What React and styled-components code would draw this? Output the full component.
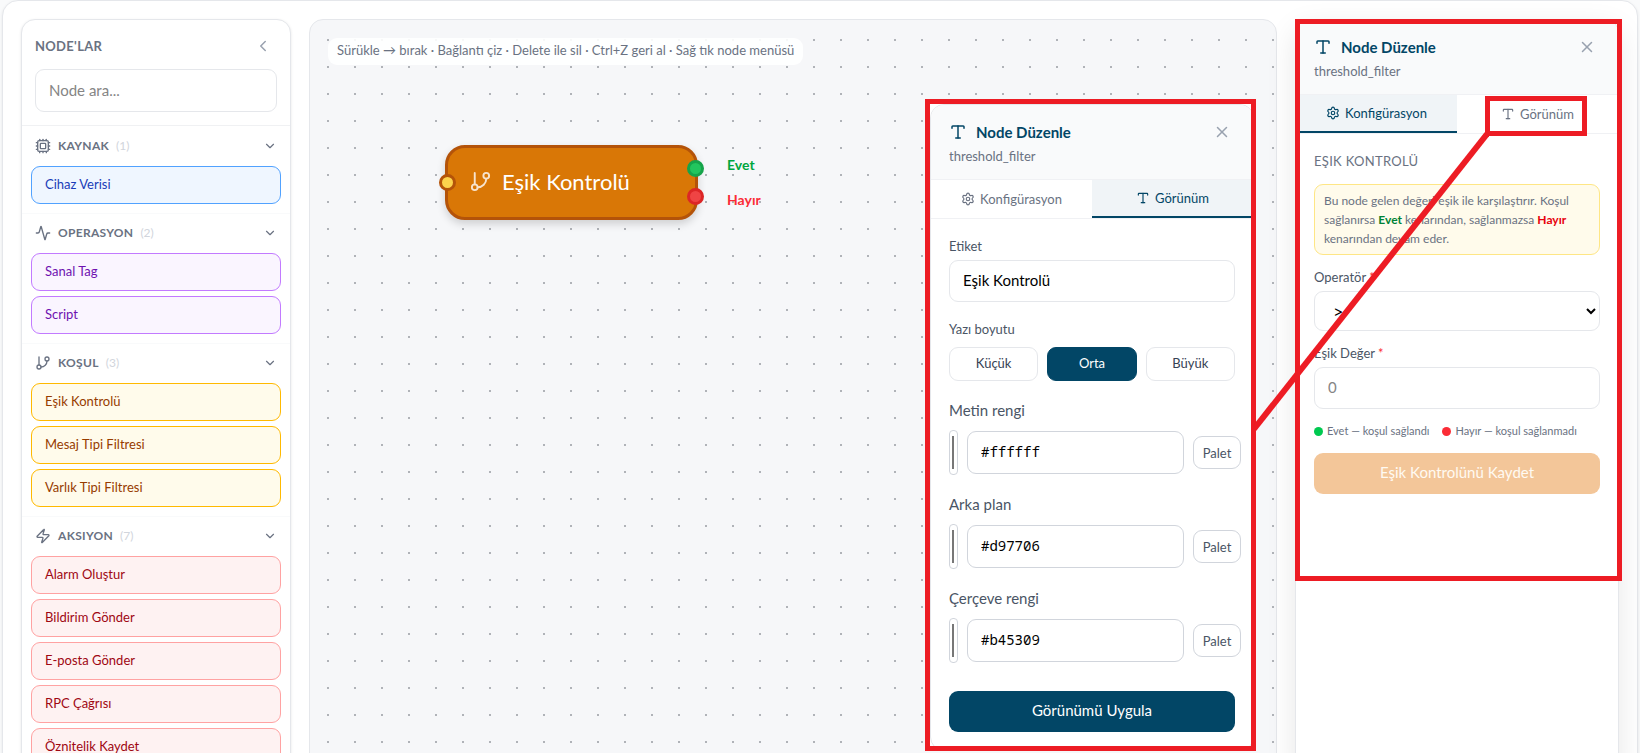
import React from "react";
import styled, { createGlobalStyle, css } from "styled-components";
import { Activity, ChevronDown, ChevronLeft, Cpu, GitBranch, Settings, Type, X, Zap } from "lucide-react";

const GlobalStyle = createGlobalStyle`
  *, *::before, *::after { box-sizing: border-box; }
  body { margin: 0; background: #f9fafb; color: #364153; font-family: Lato, "Noto Sans", sans-serif; font-size: 14px; }
  button, input, select { font: inherit; color: inherit; margin: 0; }
  button { cursor: pointer; }
  h1, h2, h3, p { margin: 0; font-weight: inherit; font-size: inherit; }
`;

const ink = "#024666";
const red = "#ed1c24";

const Page = styled.div`
  height: 100vh;
  overflow: hidden;
  padding: 0 2px;
`;

const Shell = styled.main`
  position: relative;
  display: flex;
  gap: 18px;
  padding: 18px;
  background: #fff;
  border: 1px solid #e5e7eb;
  border-radius: 16px;
  box-shadow: 0 1px 3px rgba(0, 0, 0, 0.08);
`;

/* ---------- node palette ---------- */

const Palette = styled.aside`
  flex: 0 0 270px;
  background: #fff;
  border: 1px solid #e5e7eb;
  border-radius: 14px;
  box-shadow: 0 1px 3px rgba(0, 0, 0, 0.1);
`;

const PaletteHead = styled.header`
  padding: 12px 13px 13px;
  border-bottom: 1px solid #f0f1f3;
`;

const PaletteTitleRow = styled.div`
  display: flex;
  align-items: center;
  justify-content: space-between;
  height: 27px;
  margin-bottom: 10px;
  padding-right: 5px;
`;

const PaletteTitle = styled.h2`
  font-size: 13px;
  font-weight: 700;
  letter-spacing: 0.3px;
  color: #6a7282;
`;

const IconButton = styled.button`
  display: inline-flex;
  padding: 0;
  border: 0;
  background: none;
  color: #99a1af;
`;

const Field = styled.input`
  display: block;
  width: 100%;
  height: ${(p) => (p.$tall ? 43 : 42)}px;
  min-width: 0;
  padding: 0 13px 2px;
  border: 1px solid ${(p) => (p.$mono ? "#d1d5dc" : "#e5e7eb")};
  border-radius: 9px;
  background: #fff;
  color: #000;
  font-size: 15px;
  ${(p) => p.$mono && css`font-family: "Noto Sans Mono", "DejaVu Sans Mono", monospace; font-size: 14px;`}
  &::placeholder { color: #858585; opacity: 1; }
`;

const Section = styled.section`
  padding: 0 9px 9px;
  border-top: 1px solid ${(p) => (p.$first ? "transparent" : "#f9fafb")};
`;

const SectionHead = styled.button`
  display: flex;
  align-items: center;
  gap: 7px;
  width: 100%;
  height: 39px;
  padding: 0 4px 2px;
  border: 0;
  background: none;
  color: #6a7282;
  font-size: 12px;
  > :last-child { margin-left: auto; }
`;

const SectionName = styled.span`
  font-weight: 700;
  letter-spacing: 0.3px;
`;

const SectionCount = styled.span`
  color: #d1d5dc;
`;

const NodeList = styled.div`
  display: grid;
  gap: 5px;
`;

const tones = {
  blue: ["#eff6ff", "#51a2ff", "#193cb8"],
  purple: ["#faf5ff", "#c27aff", "#6e11b0"],
  amber: ["#fffbeb", "#ffb900", "#973c00"],
  red: ["#fef2f2", "#ffa2a2", "#9f0712"],
};

const NodeItem = styled.button`
  height: 38px;
  padding: 0 13px 2px;
  text-align: left;
  border: 1px solid ${(p) => tones[p.$tone][1]};
  border-radius: 9px;
  background: ${(p) => tones[p.$tone][0]};
  color: ${(p) => tones[p.$tone][2]};
  font-size: 13px;
`;

/* ---------- canvas ---------- */

const Canvas = styled.section`
  position: relative;
  flex: 1 1 0;
  min-width: 0;
  padding: 18px;
  border: 1px solid #e5e7eb;
  border-radius: 14px;
  background: #f6f7f9 radial-gradient(circle at 1px 1px, #b0b3b8 1px, transparent 1px) 17px 19px / 27px 27px;
`;

const Hint = styled.p`
  display: inline-block;
  padding: 0 9px 2px;
  border-radius: 9px;
  background: rgba(255, 255, 255, 0.9);
  color: #6a7282;
  font-size: 13px;
  line-height: 25px;
`;

const FlowNode = styled.div`
  position: absolute;
  left: 135px;
  top: 125px;
  display: flex;
  align-items: center;
  gap: 10px;
  width: 253px;
  height: 75px;
  padding: 0 21px 3px;
  border: 3px solid #b45309;
  border-radius: 20px;
  background: #d97706;
  box-shadow: 0 4px 9px rgba(0, 0, 0, 0.16);
  color: #fff;
  font-size: 22px;
  svg { opacity: 0.8; }
`;

const Handle = styled.i`
  position: absolute;
  ${(p) => p.$side}: -9px;
  top: ${(p) => p.$top}px;
  width: 17px;
  height: 17px;
  border: 3px solid ${(p) => p.$line};
  border-radius: 50%;
  background: ${(p) => p.$fill};
`;

const PortLabel = styled.span`
  position: absolute;
  left: 279px;
  top: ${(p) => p.$top}px;
  color: ${(p) => p.$color};
  font-size: 14px;
  line-height: 18px;
  font-weight: 700;
`;

/* ---------- editor panel ---------- */

const Panel = styled.aside`
  position: relative;
  flex: 0 0 324px;
  width: 324px;
  border: 1px solid #e5e7eb;
  border-radius: 14px;
  background: #fff;
  box-shadow: ${(p) => (p.$flat ? "none" : "0 10px 30px rgba(0, 0, 0, 0.1)")};
`;

const PanelHead = styled.header`
  display: grid;
  gap: 3px;
  padding: 14px 18px;
  border-bottom: 1px solid #f0f1f4;
  border-radius: 13px 13px 0 0;
  background: #f9fafb;
`;

const PanelTitle = styled.div`
  display: flex;
  align-items: center;
  gap: 9px;
  height: 25px;
  color: ${ink};
  button { margin-left: auto; margin-right: 4px; }
`;

const TitleText = styled.h2`
  font-size: 15px;
  font-weight: 700;
`;

const PanelSub = styled.p`
  color: #6a7282;
  font-size: 13px;
  line-height: 18px;
`;

const Tabs = styled.div`
  display: flex;
  border-bottom: 1px solid #f0f1f4;
`;

const Tab = styled.button`
  flex: 1;
  display: flex;
  align-items: center;
  justify-content: center;
  gap: 5px;
  height: 38px;
  padding: 0;
  border: 0;
  border-bottom: ${(p) => (p.$active ? 2 : 0)}px solid ${ink};
  background: ${(p) => (p.$active ? "#f0f4f7" : "#fff")};
  color: ${(p) => (p.$active ? ink : "#6a7282")};
  font-size: 13px;
`;

const PanelBody = styled.div`
  display: flex;
  flex-direction: column;
  gap: ${(p) => p.$gap}px;
  padding: 18px;
`;

const Eyebrow = styled.h3`
  color: #6a7282;
  font-size: 13px;
  line-height: 19px;
  letter-spacing: 0.3px;
`;

const Callout = styled.p`
  padding: 6px 9px;
  border: 1px solid #fee685;
  border-radius: 9px;
  background: #fffbeb;
  color: #6a7282;
  font-size: 12px;
  line-height: 19px;
`;

const Mark = styled.strong`
  color: ${(p) => p.$color};
  font-weight: 700;
`;

const Group = styled.div`
  display: grid;
  gap: ${(p) => p.$gap || 5}px;
`;

const Label = styled.label`
  color: #4a5565;
  font-size: ${(p) => (p.$large ? 15 : 13)}px;
  line-height: ${(p) => (p.$large ? 22 : 18)}px;
`;

const Required = styled.span`
  color: #fb2c36;
`;

const Select = styled.select`
  width: 100%;
  height: 40px;
  padding: 0 4px 0 14px;
  border: 1px solid #e5e7eb;
  border-radius: 9px;
  background: #fff;
  color: #000;
  font-size: 18px;
`;

const Legend = styled.div`
  display: flex;
  gap: 13px;
  color: #6a7282;
  font-size: 11px;
  line-height: 18px;
`;

const LegendItem = styled.span`
  display: flex;
  align-items: center;
  gap: 4px;
  white-space: nowrap;
  &::before {
    content: "";
    width: 9px;
    height: 9px;
    border-radius: 50%;
    background: ${(p) => p.$color};
  }
`;

const Primary = styled.button`
  height: 41px;
  padding: 0 0 3px;
  margin-top: ${(p) => (p.$spaced ? 10 : 0)}px;
  border: 0;
  border-radius: 9px;
  background: ${(p) => (p.$muted ? "#f3c699" : ink)};
  color: ${(p) => (p.$muted ? "#fffaf2" : "#fff")};
  font-size: 15px;
`;

const Sizes = styled.div`
  display: grid;
  grid-template-columns: repeat(3, 1fr);
  gap: 9px;
`;

const SizeButton = styled.button`
  height: 34px;
  padding: 0 0 2px;
  border: 1px solid ${(p) => (p.$active ? ink : "#e5e7eb")};
  border-radius: 9px;
  background: ${(p) => (p.$active ? ink : "#fff")};
  color: ${(p) => (p.$active ? "#fff" : "#364153")};
  font-size: 13px;
`;

const ColorRow = styled.div`
  display: grid;
  grid-template-columns: 9px 217px 48px;
  align-items: center;
  gap: 9px;
`;

const Swatch = styled.input`
  width: 9px;
  height: 45px;
  padding: 5px 3px 5px 2px;
  border: 1px solid #d1d5dc;
  border-radius: 4px;
  background: #fff;
  &::-webkit-color-swatch-wrapper { padding: 0; }
  &::-webkit-color-swatch { border: 1px solid #777; border-radius: 0; }
`;

const PaletteButton = styled.button`
  height: 33px;
  padding: 0;
  border: 1px solid #d1d5dc;
  border-radius: 9px;
  background: #fff;
  color: #4a5565;
  font-size: 13px;
`;

/* ---------- red call-outs ---------- */

const Framed = styled.div`
  position: absolute;
  right: 20px;
  top: 79px;
  width: 331px;
  height: 652px;
  overflow: hidden;
  border: 5px solid ${red};
  background: #fff;
`;

const PanelFrame = styled.div`
  position: absolute;
  left: -1px;
  right: -4px;
  top: -1px;
  height: 562px;
  border: 5px solid ${red};
  pointer-events: none;
`;

const TabFrame = styled.div`
  position: absolute;
  right: 31px;
  top: 76px;
  width: 102px;
  height: 40px;
  border: 5px solid ${red};
  pointer-events: none;
`;

const Connector = styled.svg`
  position: absolute;
  right: 148px;
  top: 130px;
  pointer-events: none;
`;

const groups = [
  { name: "KAYNAK", icon: Cpu, tone: "blue", items: ["Cihaz Verisi"], count: 1 },
  { name: "OPERASYON", icon: Activity, tone: "purple", items: ["Sanal Tag", "Script"], count: 2 },
  { name: "KOŞUL", icon: GitBranch, tone: "amber", items: ["Eşik Kontrolü", "Mesaj Tipi Filtresi", "Varlık Tipi Filtresi"], count: 3 },
  { name: "AKSIYON", icon: Zap, tone: "red", items: ["Alarm Oluştur", "Bildirim Gönder", "E-posta Gönder", "RPC Çağrısı", "Öznitelik Kaydet"], count: 7 },
];

const colors = [
  { id: "text", label: "Metin rengi", value: "#ffffff" },
  { id: "fill", label: "Arka plan", value: "#d97706" },
  { id: "line", label: "Çerçeve rengi", value: "#b45309" },
];

function EditorPanel({ active, flat, gap, children, overlay }) {
  return (
    <Panel $flat={flat}>
      <PanelHead>
        <PanelTitle>
          <Type size={18} strokeWidth={2} />
          <TitleText>Node Düzenle</TitleText>
          <IconButton aria-label="Kapat"><X size={18} strokeWidth={2} /></IconButton>
        </PanelTitle>
        <PanelSub>threshold_filter</PanelSub>
      </PanelHead>
      <Tabs role="tablist">
        <Tab role="tab" aria-selected={active === "config"} $active={active === "config"}>
          <Settings size={14} />Konfigürasyon
        </Tab>
        <Tab role="tab" aria-selected={active === "look"} $active={active === "look"}>
          <Type size={14} />Görünüm
        </Tab>
      </Tabs>
      <PanelBody $gap={gap}>{children}</PanelBody>
      {overlay}
    </Panel>
  );
}

export default function App() {
  return (
    <Page>
      <GlobalStyle />
      <Shell>
        <Palette>
          <PaletteHead>
            <PaletteTitleRow>
              <PaletteTitle>NODE'LAR</PaletteTitle>
              <IconButton aria-label="Daralt"><ChevronLeft size={18} /></IconButton>
            </PaletteTitleRow>
            <Field $tall type="text" placeholder="Node ara..." aria-label="Node ara" />
          </PaletteHead>
          {groups.map(({ name, icon: Icon, tone, items, count }, i) => (
            <Section key={name} $first={i === 0}>
              <SectionHead>
                <Icon size={16} strokeWidth={2} />
                <SectionName>{name}</SectionName>
                <SectionCount>({count})</SectionCount>
                <ChevronDown size={14} />
              </SectionHead>
              <NodeList>
                {items.map((item) => <NodeItem key={item} $tone={tone}>{item}</NodeItem>)}
              </NodeList>
            </Section>
          ))}
        </Palette>

        <Canvas>
          <Hint>Sürükle → bırak · Bağlantı çiz · Delete ile sil · Ctrl+Z geri al · Sağ tık node menüsü</Hint>
          <FlowNode>
            <GitBranch size={23} strokeWidth={2} />
            Eşik Kontrolü
            <Handle $side="left" $top={26} $line="#b45309" $fill="#fcd34d" />
            <Handle $side="right" $top={12} $line="#16a34a" $fill="#22c55e" />
            <Handle $side="right" $top={40} $line="#dc2626" $fill="#ef4444" />
            <PortLabel $top={8} $color="#00a63e">Evet</PortLabel>
            <PortLabel $top={43} $color="#fb2c36">Hayır</PortLabel>
          </FlowNode>
          <Framed>
            <EditorPanel active="look" flat gap={18}>
              <Group>
                <Label htmlFor="node-label">Etiket</Label>
                <Field id="node-label" type="text" defaultValue="Eşik Kontrolü" />
              </Group>
              <Group $gap={9}>
                <Label as="span">Yazı boyutu</Label>
                <Sizes>
                  <SizeButton>Küçük</SizeButton>
                  <SizeButton $active>Orta</SizeButton>
                  <SizeButton>Büyük</SizeButton>
                </Sizes>
              </Group>
              {colors.map(({ id, label, value }) => (
                <Group $gap={9} key={id}>
                  <Label $large htmlFor={`color-${id}`}>{label}</Label>
                  <ColorRow>
                    <Swatch type="color" defaultValue={value} aria-label={label} />
                    <Field id={`color-${id}`} $tall $mono type="text" defaultValue={value} />
                    <PaletteButton>Palet</PaletteButton>
                  </ColorRow>
                </Group>
              ))}
              <Primary $spaced>Görünümü Uygula</Primary>
            </EditorPanel>
          </Framed>
        </Canvas>

        <EditorPanel
          active="config"
          gap={13}
          overlay={<><PanelFrame /><TabFrame /></>}
        >
          <Eyebrow>EŞIK KONTROLÜ</Eyebrow>
          <Callout>
            Bu node gelen değeri eşik ile karşılaştırır. Koşul sağlanırsa <Mark $color="#008236">Evet</Mark> kenarından,
            sağlanmazsa <Mark $color="#e7000b">Hayır</Mark> kenarından devam eder.
          </Callout>
          <Group>
            <Label htmlFor="operator">Operatör <Required>*</Required></Label>
            <Select id="operator" defaultValue=">"><option>&gt;</option></Select>
          </Group>
          <Group>
            <Label htmlFor="threshold">Eşik Değer <Required>*</Required></Label>
            <Field id="threshold" type="text" placeholder="0" />
          </Group>
          <Legend>
            <LegendItem $color="#00c950">Evet — koşul sağlandı</LegendItem>
            <LegendItem $color="#fb2c36">Hayır — koşul sağlanmadı</LegendItem>
          </Legend>
          <Primary $muted>Eşik Kontrolünü Kaydet</Primary>
        </EditorPanel>

        <Connector width="236" height="302" viewBox="0 0 236 302" aria-hidden="true">
          <path d="M1 298 L234 3" stroke={red} strokeWidth="6" fill="none" />
        </Connector>
      </Shell>
    </Page>
  );
}
